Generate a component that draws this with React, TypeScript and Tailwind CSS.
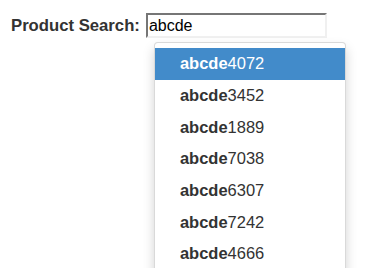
import React from "react";

const items = ["4072", "3452", "1889", "7038", "6307", "7242", "4666"];

export default function App() {
  return (
    <div
      className="h-[268px] overflow-hidden bg-white pl-[11px] pt-[13px] text-[#333333]"
      style={{ fontFamily: '"Liberation Sans", Arial, sans-serif' }}
    >
      <div className="flex items-start">
        <label className="mr-[6px] pt-[4px] text-[16.7px] font-bold leading-[17px]">Product Search:</label>
        <div className="relative">
          <div className="flex h-[25px] w-[181px] items-center border-2 border-t-[#767676] border-l-[#767676] border-r-[#f0f0f0] border-b-[#f0f0f0] pl-[1px] text-[16px] text-black">
            abcde
          </div>
          <div className="absolute left-[8px] top-[29px] w-[192px] rounded-[4px] border border-[rgba(0,0,0,0.15)] bg-white pt-[5px] pb-[5px] shadow-[0_6px_12px_rgba(0,0,0,0.175)]">
            {items.map((n, i) => (
              <div
                key={n}
                className={
                  "flex h-[31.67px] items-center pl-[25px] text-[16.5px] " +
                  (i === 0 ? "bg-[#428bca] text-white" : "text-[#333333]")
                }
              >
                <strong className="font-bold">abcde</strong>
                <span>{n}</span>
              </div>
            ))}
          </div>
        </div>
      </div>
    </div>
  );
}
